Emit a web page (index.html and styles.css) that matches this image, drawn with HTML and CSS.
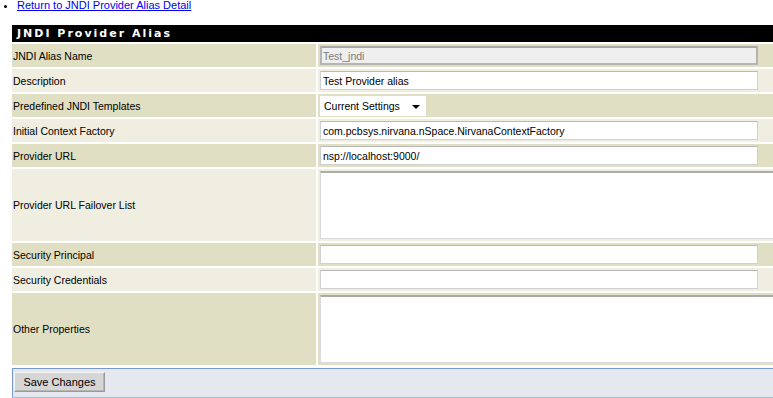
FILE: index.html
```html
<!DOCTYPE html>
<html lang="en">
<head>
    <meta charset="UTF-8">
    <title>JNDI Provider Alias</title>
    <link rel="stylesheet" href="styles.css">
</head>
<body>
<div class="page">
    <ul class="nav">
        <li><a href="#">Return to JNDI Provider Alias Detail</a></li>
    </ul>
    <form id="alias-form">
        <table class="detail">
            <tr>
                <th colspan="2">JNDI Provider Alias</th>
            </tr>
            <tr class="dark">
                <td class="label">JNDI Alias Name</td>
                <td class="value"><input type="text" class="field" value="Test_jndi" disabled></td>
            </tr>
            <tr class="light">
                <td class="label">Description</td>
                <td class="value"><input type="text" class="field" value="Test Provider alias"></td>
            </tr>
            <tr class="dark">
                <td class="label">Predefined JNDI Templates</td>
                <td class="value">
                    <span class="select-wrap">
                        <select class="picker">
                            <option>Current Settings</option>
                        </select>
                    </span>
                </td>
            </tr>
            <tr class="light">
                <td class="label">Initial Context Factory</td>
                <td class="value"><input type="text" class="field" value="com.pcbsys.nirvana.nSpace.NirvanaContextFactory"></td>
            </tr>
            <tr class="dark">
                <td class="label">Provider URL</td>
                <td class="value"><input type="text" class="field" value="nsp://localhost:9000/"></td>
            </tr>
            <tr class="light tall">
                <td class="label">Provider URL Failover List</td>
                <td class="value"><textarea class="area"></textarea></td>
            </tr>
            <tr class="dark">
                <td class="label">Security Principal</td>
                <td class="value"><input type="text" class="field"></td>
            </tr>
            <tr class="light">
                <td class="label">Security Credentials</td>
                <td class="value"><input type="password" class="field"></td>
            </tr>
            <tr class="dark tall">
                <td class="label">Other Properties</td>
                <td class="value"><textarea class="area"></textarea></td>
            </tr>
        </table>
        <div class="actions">
            <button type="button" class="save">Save Changes</button>
        </div>
    </form>
</div>
</body>
</html>
```
FILE: styles.css
```css
body {
    margin: 0;
    font-family: "Liberation Sans", Arial, sans-serif;
    font-size: 10.5px;
    color: #000;
    background: #fff;
}
.page {
    padding: 0 0 0 8px;
    overflow: hidden;
}
.nav {
    margin: -1px 0 11px 0;
    padding-left: 9px;
    line-height: 13px;
    font-size: 11px;
}
.nav a {
    color: #0000ee;
}
.detail {
    margin-left: 2px;
    border-collapse: separate;
    border-spacing: 2px;
}
.detail th {
    background: #000;
    color: #fff;
    font-family: "DejaVu Sans", Verdana, sans-serif;
    font-size: 11px;
    font-weight: bold;
    letter-spacing: 2px;
    text-align: left;
    height: 17px;
    padding: 0 0 0 5px;
    line-height: 17px;
}
.detail td {
    height: 23px;
    padding: 0;
    vertical-align: middle;
}
.detail .label {
    width: 303px;
    min-width: 303px;
    padding-left: 1px;
}
.detail .value {
    width: 472px;
    padding-left: 2px;
}
.dark td {
    background: #e0dfc3;
}
.light td {
    background: #efeee0;
}
.tall td {
    height: 72px;
}
.field {
    box-sizing: border-box;
    display: block;
    width: 438px;
    height: 19px;
    margin: 0;
    padding: 0 2px;
    border: 1px solid #cfd0d0;
    border-top-color: #b8b8b8;
    background: #fff;
    font-family: "Liberation Sans", Arial, sans-serif;
    font-size: 10.5px;
    color: #000;
}
.field:disabled {
    background: #efefef;
    border: 2px solid #b4b4b4;
    border-top-color: #a8a8a8;
    padding-left: 1px;
    color: #7a7a7a;
}
.select-wrap {
    position: relative;
    display: inline-block;
}
.picker {
    appearance: none;
    -webkit-appearance: none;
    width: 106px;
    height: 20px;
    margin: 0;
    padding: 0 0 0 3px;
    border: 1px solid #fff;
    background: #fff;
    font-family: "Liberation Sans", Arial, sans-serif;
    font-size: 10.5px;
    color: #000;
    vertical-align: middle;
}
.select-wrap::after {
    content: "";
    position: absolute;
    right: 6px;
    top: 9px;
    border-left: 4px solid transparent;
    border-right: 4px solid transparent;
    border-top: 4px solid #000;
    pointer-events: none;
}
.area {
    box-sizing: border-box;
    display: block;
    width: 470px;
    height: 68px;
    margin: 0;
    padding: 2px;
    border: 1px solid #dadada;
    border-top: 2px solid #ababab;
    background: #fff;
    font-family: "Liberation Sans", Arial, sans-serif;
    font-size: 10.5px;
}
.actions {
    margin: 1px 0 0 4px;
    width: 800px;
    height: 25px;
    background: #e5e8ee;
    border: 1px solid #7897cf;
    border-bottom-color: #a5bbe0;
    padding: 3px 0 0 1px;
    box-sizing: content-box;
}
.save {
    width: 91px;
    height: 20px;
    padding: 0;
    background: #d6d6d6;
    border: 1px solid #9a9a9a;
    border-top-color: #f4f4f4;
    border-left-color: #f4f4f4;
    box-shadow: inset -1px -1px 0 #b5b5b5;
    font-family: "Liberation Sans", Arial, sans-serif;
    font-size: 11px;
    color: #000;
    cursor: pointer;
}
```
